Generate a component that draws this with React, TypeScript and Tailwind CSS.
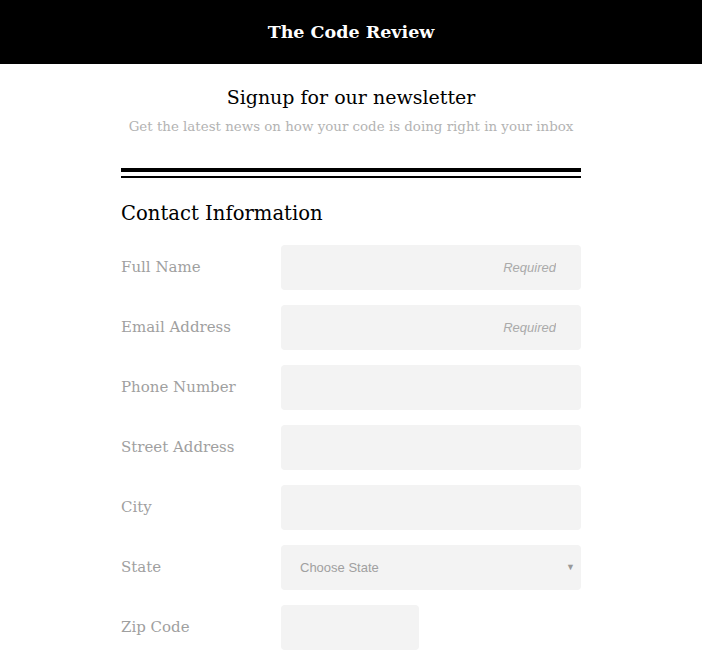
const serif = { fontFamily: '"DejaVu Serif", "Liberation Serif", serif' };
const sans = { fontFamily: '"Liberation Sans", Arial, sans-serif' };

interface FieldProps {
    label: string;
    required?: boolean;
    narrow?: boolean;
}

const Field = ({ label, required, narrow }: FieldProps) => {
    return (
        <div className="flex items-center h-[45px]">
            <label className="w-[160px] text-[15px] text-[#9f9f9f]" style={serif}>
                {label}
            </label>
            <input
                placeholder={required ? "Required" : ""}
                className={`${narrow ? "w-[138px]" : "w-[300px]"} h-[45px] bg-[#f3f3f3] rounded-[4px] px-[25px] text-right text-[13px] italic placeholder:text-[#aaaaaa] outline-none`}
                style={sans}
            />
        </div>
    );
};

export default function App() {
    return (
        <div className="min-h-screen bg-white">
            <header className="h-[64px] bg-black flex items-center justify-center">
                <h1 className="text-white text-[17.5px] font-bold" style={serif}>
                    The Code Review
                </h1>
            </header>
            <main className="w-[460px] mx-auto pt-[19px]">
                <div className="text-center">
                    <h2 className="text-[19px] text-black leading-[28px]" style={serif}>
                        Signup for our newsletter
                    </h2>
                    <p className="text-[13.4px] text-[#b3b3b3] leading-[22px] mt-[5px]" style={serif}>
                        Get the latest news on how your code is doing right in your inbox
                    </p>
                </div>
                <div className="mt-[30px] border-t-4 border-b-2 border-black h-[10px]" />
                <h3 className="mt-[22px] text-[19.6px] text-black leading-[28px]" style={serif}>
                    Contact Information
                </h3>
                <div className="mt-[17px] flex flex-col gap-[15px]">
                    <Field label="Full Name" required />
                    <Field label="Email Address" required />
                    <Field label="Phone Number" />
                    <Field label="Street Address" />
                    <Field label="City" />
                    <div className="flex items-center h-[45px]">
                        <label className="w-[160px] text-[15px] text-[#9f9f9f]" style={serif}>
                            State
                        </label>
                        <div className="relative w-[300px] h-[45px] bg-[#f3f3f3] rounded-[4px] flex items-center pl-[19px]">
                            <span className="text-[13px] text-[#a0a0a0]" style={sans}>
                                Choose State
                            </span>
                            <span className="absolute right-[6px] top-[15px] text-[9px] text-[#999999]">▼</span>
                        </div>
                    </div>
                    <Field label="Zip Code" narrow />
                </div>
            </main>
        </div>
    );
}
